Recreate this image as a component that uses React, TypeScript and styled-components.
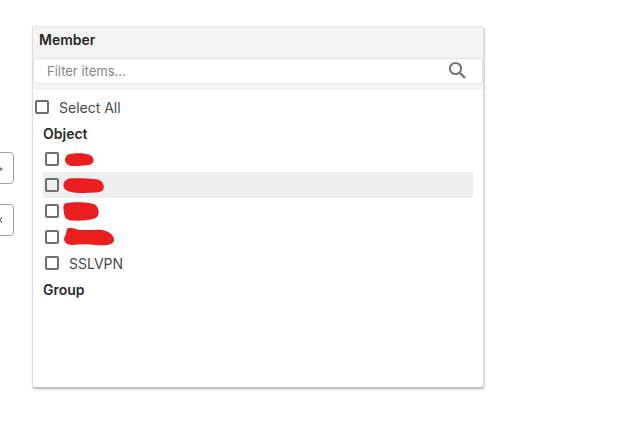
import React from "react";
import styled, { createGlobalStyle } from "styled-components";

const Global = createGlobalStyle`
  html, body { margin: 0; padding: 0; background: #fff; }
  body { font-family: Inter, "Liberation Sans", sans-serif; color: #2b2b2b; overflow: hidden; }
`;

const Page = styled.div`
  display: flex;
  gap: 18px;
  padding-top: 26px;
  height: 427px;
  box-sizing: border-box;
`;

const SideColumn = styled.div`
  width: 14px;
  padding-top: 126px;
  display: flex;
  flex-direction: column;
  gap: 20px;
  overflow: hidden;
`;

const SideButton = styled.button`
  flex: none;
  width: 40px;
  height: 32px;
  margin-left: -26px;
  padding: 0 6px 0 0;
  border: 1px solid #a4a4a4;
  border-radius: 4px;
  background: #fff;
  display: flex;
  align-items: center;
  justify-content: flex-end;
`;

const Panel = styled.section`
  width: 453px;
  height: 363px;
  box-sizing: border-box;
  border: 1px solid #e6e6e6;
  border-bottom: 2px solid #c4c4c4;
  border-right: 2px solid #dcdcdc;
  border-left: 1px solid #dedede;
  border-radius: 4px;
  background: #fff;
  box-shadow: 0 1px 2px rgba(0, 0, 0, 0.12);
  overflow: hidden;
`;

const Header = styled.header`
  background: #f4f4f4;
  height: 63px;
  display: flex;
  flex-direction: column;
`;

const Title = styled.h2`
  margin: 0;
  height: 31px;
  padding-left: 6px;
  font-size: 14px;
  line-height: 26px;
  font-weight: 600;
  color: #262626;
`;

const SearchBox = styled.div`
  height: 26px;
  box-sizing: border-box;
  display: flex;
  align-items: center;
  padding: 0 14px 0 13px;
  background: #fff;
  border: 1px solid #e4e4e4;
  border-radius: 4px;
`;

const SearchInput = styled.input`
  flex: 1;
  border: 0;
  outline: 0;
  padding: 0;
  background: transparent;
  font: 13px Inter, sans-serif;
  color: #333;
  &::placeholder { color: #858585; opacity: 1; }
`;

const Body = styled.div`
  padding: 4px 0 0 2px;
`;

const SelectAllRow = styled.label`
  display: flex;
  align-items: center;
  height: 26px;
  gap: 10px;
  font-size: 14px;
  color: #4a4a4a;
`;

const GroupLabel = styled.div`
  height: 25px;
  margin-top: 1px;
  padding-left: 8px;
  font-size: 14px;
  font-weight: 600;
  line-height: 25px;
  color: #2b2b2b;
`;

const ItemRow = styled.label<{ $hover?: boolean }>`
  display: flex;
  align-items: center;
  height: 26px;
  width: 430px;
  margin-left: 8px;
  padding-left: 2px;
  box-sizing: border-box;
  background: ${(p) => (p.$hover ? "#efefef" : "transparent")};
  font-size: 14px;
  color: #4a4a4a;
`;

const Box = styled.span`
  flex: none;
  width: 14px;
  height: 14px;
  box-sizing: border-box;
  border: 2px solid #707070;
  border-radius: 2px;
`;

const ItemText = styled.span`
  margin-left: 10px;
`;

const Blob = styled.svg<{ $left: number }>`
  flex: none;
  margin-left: ${(p) => p.$left}px;
`;

const Redact = ({ w, h, left, d }: { w: number; h: number; left: number; d: string }) => (
  <Blob $left={left} width={w} height={h} viewBox={`0 0 ${w} ${h}`}>
    <path d={d} fill="#ea1e1e" />
  </Blob>
);

export default function App() {
  return (
    <>
      <Global />
      <Page>
        <SideColumn>
          <SideButton>
            <svg width="12" height="12" viewBox="0 0 12 12">
              <circle cx="6" cy="7" r="1.5" fill="#777" />
            </svg>
          </SideButton>
          <SideButton>
            <svg width="12" height="12" viewBox="0 0 12 12" fill="none" stroke="#777" strokeWidth="1.3">
              <path d="M2 3.5 L7 8.5 M7 3.5 L2 8.5" />
            </svg>
          </SideButton>
        </SideColumn>
        <Panel>
          <Header>
            <Title>Member</Title>
            <SearchBox>
              <SearchInput placeholder="Filter items..." readOnly />
              <svg width="20" height="20" viewBox="0 0 20 20" fill="none" stroke="#757575">
                <circle cx="7.5" cy="7.5" r="5.6" strokeWidth="2" />
                <path d="M11.5 11.5 L17 17" strokeWidth="2.4" />
              </svg>
            </SearchBox>
          </Header>
          <Body>
            <SelectAllRow>
              <Box />
              Select All
            </SelectAllRow>
            <GroupLabel>Object</GroupLabel>
            <ItemRow>
              <Box />
              <Redact left={6} w={29} h={13} d="M5 1 C11 0 20 0 25 2 C29 4 30 9 26 11.5 C20 13 12 13 6 13 C1 12 -1 8 0.5 4.5 C1.5 2 3 1.5 5 1Z" />
            </ItemRow>
            <ItemRow $hover>
              <Box />
              <Redact left={4} w={41} h={15} d="M6 0.5 C14 0 28 0.5 35 1.5 C40 3 42 8 40 12 C37 15 30 14.5 22 15 C14 15 6 14.5 3 12 C-1 9 -0.5 2.5 6 0.5Z" />
            </ItemRow>
            <ItemRow>
              <Box />
              <Redact left={4} w={36} h={19} d="M3 1 C10 0 24 0 31 2 C36 5 37 11 34 15 C29 18.5 18 19 8 18.5 C2 18 1 13 1 10 C0 6 0 2 3 1Z" />
            </ItemRow>
            <ItemRow>
              <Box />
              <Redact left={5} w={50} h={18} d="M3 1 C5 -1 9 0 13 1.5 C20 3 30 1 38 2 C46 3 51 9 50 13 C48 17 42 18 32 17 C24 16 16 16 8 17 C2 17 -1 13 0.5 9 C2 7 2 5 3 1Z" />
            </ItemRow>
            <ItemRow>
              <Box />
              <ItemText>SSLVPN</ItemText>
            </ItemRow>
            <GroupLabel>Group</GroupLabel>
          </Body>
        </Panel>
      </Page>
    </>
  );
}
